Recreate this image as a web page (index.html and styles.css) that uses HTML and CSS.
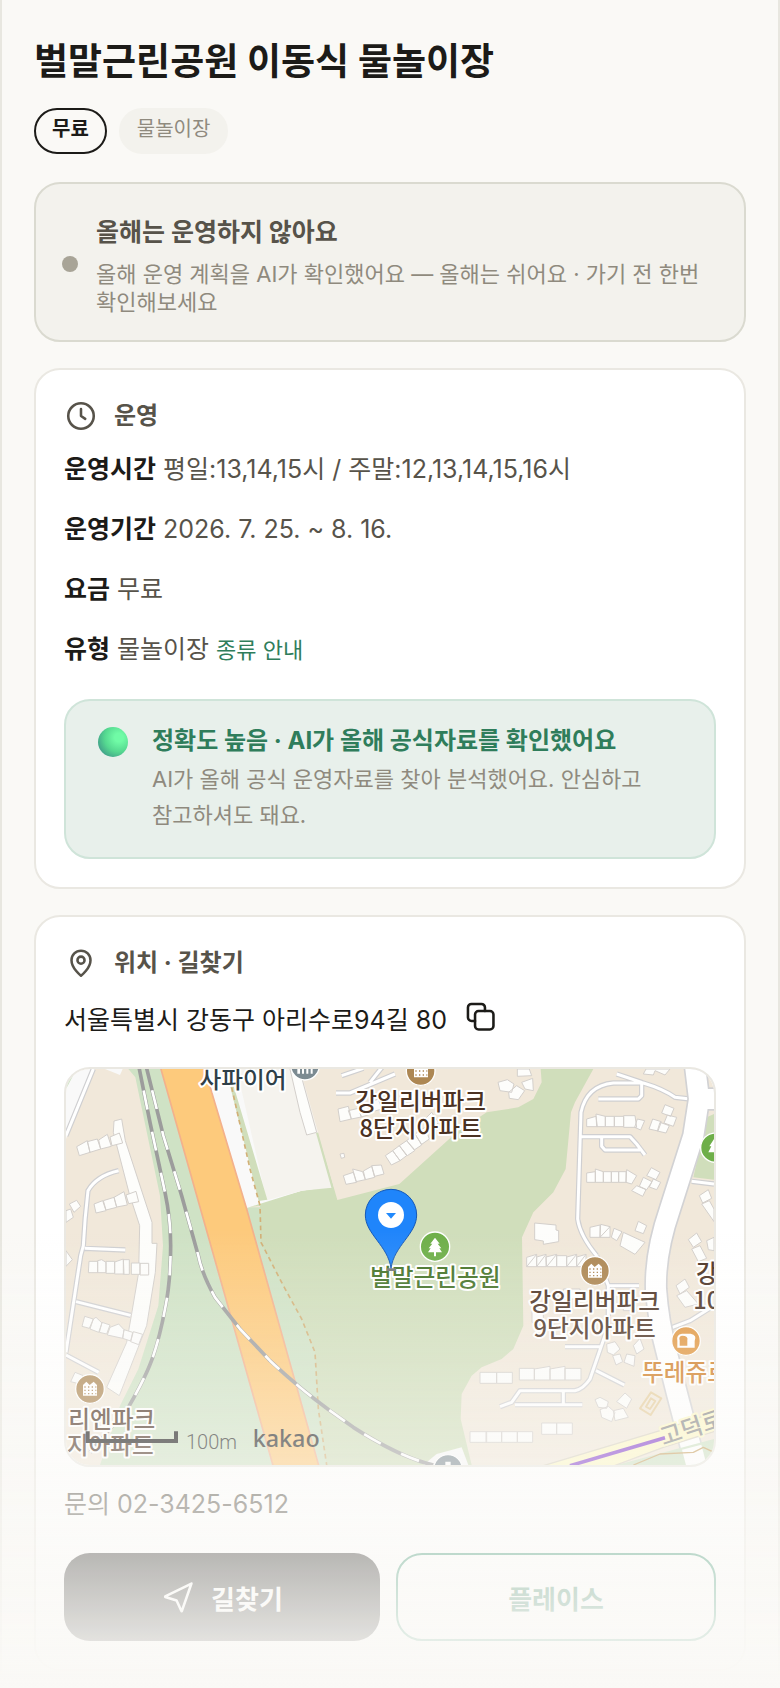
FILE: index.html
```
<!DOCTYPE html>
<html lang="ko">
<head>
    <meta charset="UTF-8">
    <meta name="viewport" content="width=device-width, initial-scale=1.0">
    <title>벌말근린공원 이동식 물놀이장</title>
    <link rel="stylesheet" href="styles.css">
</head>
<body>
    <main class="page">
        <h1>벌말근린공원 이동식 물놀이장</h1>
        <div class="tags">
            <span class="tag tag-free">무료</span>
            <span class="tag">물놀이장</span>
        </div>

        <section class="notice">
            <span class="notice-dot"></span>
            <div>
                <h2>올해는 운영하지 않아요</h2>
                <p>올해 운영 계획을 AI가 확인했어요 — 올해는 쉬어요 · 가기 전 한번 확인해보세요</p>
            </div>
        </section>

        <!-- 운영 정보 -->
        <section class="card">
            <h2 class="card-title">
                <svg class="icon" viewBox="0 0 24 24"><circle cx="12" cy="12" r="9"/><path d="M12 7v5l3 2"/></svg>
                운영
            </h2>
            <div class="rows">
                <p><strong>운영시간</strong> 평일:13,14,15시 / 주말:12,13,14,15,16시</p>
                <p><strong>운영기간</strong> 2026. 7. 25. ~ 8. 16.</p>
                <p><strong>요금</strong> 무료</p>
                <p><strong>유형</strong> 물놀이장 <a href="#">종류 안내</a></p>
            </div>
            <div class="trust">
                <span class="ball"></span>
                <div>
                    <h3>정확도 높음 · AI가 올해 공식자료를 확인했어요</h3>
                    <p>AI가 올해 공식 운영자료를 찾아 분석했어요. 안심하고 참고하셔도 돼요.</p>
                </div>
            </div>
        </section>

        <!-- 위치 -->
        <section class="card">
            <h2 class="card-title">
                <svg class="icon" viewBox="0 0 24 24"><path d="M12 21s6.700-5.200 6.700-11A6.700 6.700 0 0 0 5.300 10c0 5.800 6.700 11 6.700 11z"/><circle cx="12" cy="10" r="2.500"/></svg>
                위치 · 길찾기
            </h2>
            <div class="address">
                <span>서울특별시 강동구 아리수로94길 80</span>
                <button type="button" class="copy" aria-label="주소 복사">
                    <svg class="icon" viewBox="0 0 24 24"><rect x="8.500" y="8.500" width="13" height="13" rx="2.500"/><path d="M8.500 15.500H6A2.500 2.500 0 0 1 3.500 13V6A2.500 2.500 0 0 1 6 3.500h7A2.500 2.500 0 0 1 15.500 6v2.500"/></svg>
                </button>
            </div>

            <div class="map">
                <svg viewBox="48 30 1944 1188" preserveAspectRatio="xMidYMid slice">
                    <rect class="land" x="48" y="30" width="1944" height="1188"/>
                    <!-- 녹지 -->
                    <path class="verge" d="M235 30L256 55 330 410 339 560 325 740 265 930 210 1040 150 1218H1000V445H590L470 30Z"/>
                    <path class="park" d="M590 445L650 425 755 395 815 386 850 385 1000 30H1630L1575 130 1563 160 1547 330 1510 400 1450 460 1416 535 1420 800 1390 870 1355 900 1295 925 1265 950 1235 1005 1232 1080 1265 1218H830L805 1050 795 880 755 780 700 680 633 550 630 440Z"/>
                    <path class="plain" d="M462 30H770L860 385 815 386 755 395 590 447Z"/>
                    <path class="plain-warm" d="M560 30H770L860 385 755 395 650 424Z"/>
                    <path class="park" d="M535 30L552 85 652 422 626 426 540 80ZM798 222L806 220 862 420 848 400Z"/>
                    <path class="land" d="M750 30L862 423 1048 375 1220 220 1310 160 1405 145 1450 120 1475 70 1472 30Z"/>
                    <path class="plain" d="M48 60L80 30H130L48 240ZM165 30H218L210 48Z"/>
                    <path class="verge" d="M48 90L80 30H48Z"/>
                    <path class="plain" d="M1120 1218L1160 1185 1235 1165 1255 1218Z"/>

                    <!-- 고속도로 -->
                    <path class="highway" d="M330 20L672 1230H809L590 450 485 100 463 20Z"/>
                    <path class="trail" d="M545 85L600 330 630 440 633 550 700 680 755 780 795 880 805 1050 830 1218"/>

                    <!-- 철도 -->
                    <path class="rail" d="M266 20L300 190 345 400Q362 480 362 560 362 670 345 750 330 830 310 890 290 950 235 1045L120 1180"/>
                    <path class="rail-dash" d="M266 20L300 190 345 400Q362 480 362 560 362 670 345 750 330 830 310 890 290 950 235 1045L120 1180"/>
                    <path class="rail" d="M288 20L340 230 395 410 445 590Q456 645 495 715L570 810 660 905Q750 990 840 1055L910 1105Q1050 1195 1150 1218"/>
                    <path class="rail-dash" d="M288 20L340 230 395 410 445 590Q456 645 495 715L570 810 660 905Q750 990 840 1055L910 1105Q1050 1195 1150 1218"/>

                    <!-- 골목길 -->
                    <g class="street-edge">
                        <path d="M130 30L48 230M206 335Q140 350 114 395 104 480 100 560L92 590 48 880M104 568L226 573M78 728L242 769M48 888L146 940"/>
                        <path d="M1640 590Q1590 530 1583 480L1593 160Q1610 80 1690 72H1780Q1840 90 1875 115L1920 120M1700 45L1775 70V110L1765 120H1645M1595 233H1740L1760 255 1785 288M1655 235V262L1665 273H1770M1640 590L1675 680H1767M1675 680V800L1620 960Q1600 990 1575 995H1410L1385 1030 1350 1043M1395 1037H1597M1540 1000V1035M1545 863H1650M1638 935L1723 978M1860 808L1920 785 1992 740M1925 367L1992 375"/>
                        <path d="M858 102H900L1035 45M875 50L940 28M1000 20L960 70"/>
                    </g>
                    <g class="street">
                        <path d="M130 30L48 230M206 335Q140 350 114 395 104 480 100 560L92 590 48 880M104 568L226 573M78 728L242 769M48 888L146 940"/>
                        <path d="M1640 590Q1590 530 1583 480L1593 160Q1610 80 1690 72H1780Q1840 90 1875 115L1920 120M1700 45L1775 70V110L1765 120H1645M1595 233H1740L1760 255 1785 288M1655 235V262L1665 273H1770M1640 590L1675 680H1767M1675 680V800L1620 960Q1600 990 1575 995H1410L1385 1030 1350 1043M1395 1037H1597M1540 1000V1035M1545 863H1650M1638 935L1723 978M1860 808L1920 785 1992 740M1925 367L1992 375"/>
                        <path d="M858 102H900L1035 45M875 50L940 28M1000 20L960 70"/>
                    </g>

                    <!-- 도로 -->
                    <path class="park" d="M1992 165L1970 175 1930 355 1992 362Z"/>
                    <path class="road-edge" d="M1935 20L1947 120 1930 230 1860 450Q1815 580 1818 690 1825 790 1850 880L1880 1000 1940 1230M1940 120L1992 120"/>
                    <path class="road" d="M1935 20L1947 120 1930 230 1860 450Q1815 580 1818 690 1825 790 1850 880L1880 1000 1940 1230M1940 120L1992 120"/>
                    <path class="verge" d="M1700 1218L1992 1140V1218Z"/>
                    <path class="avenue" d="M1440 1232L1840 1112 2000 1058V1115L1840 1165 1680 1225Z"/>
                    <path class="subway" d="M1560 1220L1845 1136"/>
                    <path class="road" d="M1925 1165L1942 1230"/>
                    <path class="main-trail" d="M1750 1218L1830 1185 1930 1180 1960 1165 1992 1180"/>

                    <!-- 건물 -->
                    <g class="building">
                        <path d="M192 186L215 180 226 245 306 490V553H321L316 640 290 800 208 1010 170 985 230 850 244 770 266 640 269 500 238 405 190 220Z"/>
                        <path d="M80 263L112 245 120 280 88 290ZM112 248L142 240 152 270 120 280ZM146 243L172 226 184 262 152 270ZM180 234L208 222 218 252 186 260Z"/>
                        <path d="M132 435L158 425 168 455 138 462ZM160 425L192 415 200 445 168 453ZM192 415L222 398 232 438 200 444ZM228 408L258 397 266 428 236 434Z"/>
                        <path d="M48 455L62 450 70 475 48 490ZM58 435L80 424 92 442 72 460ZM48 575L67 602 48 622Z"/>
                        <path d="M117 607H143V641H115ZM143 605L155 602 168 610V641H143ZM168 607H194V643H168ZM194 609L220 600 222 645H194ZM220 602H238V646H220ZM244 612H270V646H244ZM270 613H296V648H270Z"/>
                        <path d="M104 772L130 780 118 808 96 802ZM130 780L138 775 156 792 146 820 120 810ZM156 790L180 798 170 825 148 820ZM180 805L206 795 222 812 218 838 172 828ZM222 812L248 820 242 846 218 838ZM250 818L278 826 266 857 242 848ZM75 940L100 950 90 975 62 968Z"/>
                        <path d="M720 30L748 30 800 220 770 228 750 160ZM870 285L882 283 884 295 874 298Z"/>
                        <path d="M864 150L895 142 904 180 870 188ZM895 155L925 148 934 174 904 180ZM925 145L950 132 960 166 934 174ZM960 130L985 120 996 150 968 158Z"/>
                        <path d="M880 350L910 340 920 370 888 376ZM908 330L938 338 946 362 918 368ZM940 336L965 322 974 355 946 362ZM965 320L994 318 1002 345 974 352Z"/>
                        <path d="M1006 290L1028 275 1050 305 1024 318ZM1028 275L1048 260 1070 290 1050 305ZM1048 260L1070 245 1094 275 1072 290ZM1070 245L1095 225 1115 258 1094 272ZM1095 225L1125 205 1138 240 1115 256ZM1120 185L1145 160 1165 190 1140 220Z"/>
                        <path d="M1344 70L1372 62 1392 75 1385 100 1350 95ZM1402 30H1438L1445 50 1402 52ZM1415 70L1448 58 1450 95 1425 90ZM1376 100L1400 80 1424 95 1405 122 1378 118ZM1788 30L1780 45 1810 48 1815 35 1845 48 1860 30Z"/>
                        <path d="M1610 180L1638 172 1642 203H1610ZM1638 165L1666 172V203H1640ZM1666 172H1693V203H1666ZM1693 172H1721V203H1693ZM1721 170H1755L1760 205H1721ZM1762 180L1784 185 1772 213 1754 205Z"/>
                        <path d="M1845 137L1872 148 1862 172 1835 162ZM1852 168L1880 175 1870 202 1842 192ZM1808 180L1834 188 1824 216 1797 210ZM1830 190L1858 200 1848 222 1822 216Z"/>
                        <path d="M1610 342L1636 338V370H1610ZM1636 330L1660 338V370H1636ZM1660 338H1684V370H1660ZM1684 338H1706V370H1684ZM1706 338H1728V370H1706ZM1730 332L1760 350 1745 375 1728 370Z"/>
                        <path d="M1804 326L1830 340 1818 362 1790 350ZM1780 355L1806 368 1790 392 1768 382ZM1810 360L1832 370 1820 392 1798 384ZM1760 380L1788 392 1778 412 1745 395Z"/>
                        <path d="M1454 492L1518 498V513L1526 515V548L1480 556V546L1454 542ZM1620 505L1650 498V535H1620ZM1652 496L1680 503V535H1650ZM1650 535L1680 503M1692 508L1716 518 1700 545 1684 535ZM1765 487L1790 500 1780 524 1755 515ZM1720 520L1785 550 1755 586 1710 560Z"/>
                        <path d="M1430 595L1460 586V623H1430ZM1460 594L1488 586V623H1460ZM1488 594L1520 586V623H1490ZM1520 590H1550V623H1520ZM1550 594L1580 586V623H1550ZM1580 594L1608 586V623H1580ZM1430 623L1460 586M1460 623L1488 586M1490 623L1520 586M1550 623L1580 586M1580 623L1608 586"/>
                        <path d="M1446 755H1480V790H1446ZM1540 690H1590V720H1540ZM1720 730H1750V755H1720Z"/>
                        <path d="M1290 940H1340V973H1290ZM1340 940H1387V973H1340ZM1408 928H1453V963H1408ZM1453 930L1500 922V963H1453ZM1500 930L1545 922V963H1500ZM1545 928H1593V963H1545Z"/>
                        <path d="M1260 1118H1310V1150H1260ZM1308 1118H1355V1150H1308ZM1355 1118H1402V1150H1355ZM1402 1118H1448V1150H1402ZM1475 1092H1520V1126H1475ZM1520 1092H1567V1126H1520Z"/>
                        <path d="M1670 855L1695 848 1710 870 1690 888 1672 880ZM1688 890L1710 885 1718 908 1698 918ZM1730 885L1755 890 1752 922 1722 910ZM1750 860L1770 838 1782 870 1760 885Z"/>
                        <path d="M1635 1022L1650 1015 1675 1028 1670 1048 1645 1045ZM1650 1052L1675 1042 1695 1060 1685 1088 1655 1075ZM1690 1055L1720 1048 1735 1075 1695 1085ZM1700 1028L1725 1002 1745 1020 1730 1048Z"/>
                        <path d="M1948 410L1975 392 1985 418 1958 432ZM1955 435L1978 425 1992 450V488ZM1915 542L1940 522 1955 548 1930 565ZM1925 570L1950 560 1970 598 1945 608ZM1970 545L1992 535V575L1975 572ZM1878 680L1905 660 1918 685 1890 705ZM1880 710L1910 695 1945 735 1905 745Z"/>
                    </g>
                    <path class="court" d="M1803 1000L1834 1018 1802 1068 1770 1048ZM1803 1018L1816 1026 1800 1050 1788 1043Z"/>

                    <!-- 마커 -->
                    <g class="marker apt">
                        <circle cx="1112" cy="36" r="43"/><circle cx="1635" cy="636" r="43"/><circle cx="120" cy="990" r="43"/>
                    </g>
                    <g class="marker-sign">
                        <path d="M1092 15h42v40h-42z"/>
                        <path d="M1614 656v-32l10-10 10 10 12-10 10 10v32zM99 1010v-32l10-10 10 10 12-10 10 10v32z"/>
                    </g>
                    <g class="marker-window">
                        <path d="M1096 24h36M1096 36h36M1096 48h36M1618 630h36M1618 640h36M1618 650h36M103 984h36M103 994h36M103 1004h36"/>
                    </g>
                    <g class="marker civic"><circle cx="765" cy="20" r="43"/><circle cx="1194" cy="1230" r="43"/></g>
                    <path class="marker-sign" d="M742 30h8v14h-8zM756 30h6v14h-6zM769 30h6v14h-6zM782 30h6v14h-6zM1186 1208h16v20h-16z"/>
                    <g class="marker green"><circle cx="1155" cy="563" r="44"/><circle cx="1996" cy="266" r="44"/></g>
                    <path class="marker-sign" d="M1155 536l14 18h-6l11 14h-6l8 12h-18v12h-6v-12h-18l8-12h-6l11-14h-6zM1992 240l-14 22h6l-9 18h17z"/>
                    <g class="marker bakery"><circle cx="1908" cy="846" r="43"/></g>
                    <path class="marker-sign" d="M1882 866V846Q1878 826 1896 824H1922Q1942 828 1934 846V866Z"/>
                    <path class="bread" d="M1889 860V844Q1885 832 1896 830 1916 830 1912 844V860Z"/>

                    <!-- 지명 -->
                    <g class="place">
                        <text class="dark" x="579" y="88">사파이어</text>
                        <text x="1112" y="154">강일리버파크</text>
                        <text x="1112" y="233">8단지아파트</text>
                        <text x="1634" y="754">강일리버파크</text>
                        <text x="1634" y="833">9단지아파트</text>
                        <text x="1971" y="669">강</text>
                        <text class="start" x="1930" y="750">10단지</text>
                        <text class="start" x="55" y="1107">리엔파크</text>
                        <text class="start" x="50" y="1186">지아파트</text>
                        <text class="start orange" x="1776" y="965">뚜레쥬르</text>
                        <text class="park-name" x="1156" y="682">벌말근린공원</text>
                        <text class="road-name start" x="1840" y="1160" transform="rotate(-18 1840 1160)">고덕로</text>
                    </g>

                    <path class="pin-shadow" d="M1010 628h28v8h-28z"/>
                    <path class="pin" d="M1023 628C1014 560 946 525 946 468A77 77 0 0 1 1100 468C1100 525 1032 560 1023 628Z"/>
                    <circle class="pin-hole" cx="1023" cy="468" r="39"/>
                    <path class="pin-arrow" d="M1008 462h30l-15 17z"/>

                    <path class="scale" d="M113 1117V1146H378V1117"/>
                    <text class="scale-text" x="408" y="1169">100m</text>
                    <text class="logo-text" x="608" y="1163">kakao</text>
                </svg>
            </div>

            <p class="phone">문의 02-3425-6512</p>
            <div class="actions">
                <button type="button" class="btn btn-dark">
                    <svg class="icon" viewBox="0 0 24 24"><path d="M21.500 2.500L3 11.500v.500l8 2.500 3.500 7.500h.200z"/></svg>
                    길찾기
                </button>
                <button type="button" class="btn btn-line">플레이스</button>
            </div>
        </section>
    </main>
    <div class="fade"></div>
</body>
</html>
```
FILE: styles.css
```
* {
    box-sizing: border-box;
    margin: 0;
    padding: 0;
}
body {
    font-family: Inter, "Noto Sans CJK KR", sans-serif;
    font-size: 25px;
    line-height: 42px;
    color: #1c1b18;
    background-color: #faf9f6;
    word-break: keep-all;
}
.page {
    padding: 32px 32px 16px;
    border-left: 2px solid #e8e7e0;
    border-right: 2px solid #e8e7e0;
}
h1 {
    font-size: 37px;
    line-height: 60px;
    font-weight: 700;
}
.tags {
    display: flex;
    gap: 12px;
    margin-top: 16px;
}
.tag {
    padding: 4px 16px 8px;
    border: 2px solid #f3f2ed;
    border-radius: 23px;
    background-color: #f3f2ed;
    color: #8f8a7e;
    font-size: 20px;
    line-height: 30px;
}
.tag-free {
    border-color: #1c1b18;
    background-color: transparent;
    color: #1c1b18;
    font-weight: 600;
}

/* 운영 안내 */
.notice {
    display: flex;
    align-items: center;
    gap: 18px;
    margin-top: 28px;
    padding: 28px 26px 24px;
    border: 2px solid #dadad0;
    border-radius: 26px;
    background-color: #f3f2ed;
}
.notice-dot {
    flex-shrink: 0;
    width: 16px;
    height: 16px;
    border-radius: 50%;
    background-color: #a8a497;
}
.notice h2 {
    font-size: 25px;
    line-height: 40px;
    color: #57534a;
}
.notice p {
    margin-top: 8px;
    font-size: 22px;
    line-height: 28px;
    color: #8f8a7e;
}

.card {
    margin-top: 26px;
    padding: 28px;
    border: 2px solid #eae8e2;
    border-radius: 26px;
    background-color: #fff;
}
.card-title {
    display: flex;
    align-items: center;
    gap: 16px;
    font-size: 24px;
    line-height: 36px;
    color: #57534a;
}
.icon {
    flex-shrink: 0;
    width: 34px;
    height: 34px;
    fill: none;
    stroke: currentColor;
    stroke-width: 1.8;
    stroke-linecap: round;
    stroke-linejoin: round;
}
.rows {
    display: grid;
    gap: 18px;
    margin-top: 14px;
    color: #57534a;
}
.rows strong {
    color: #1c1b18;
}
.rows a {
    font-size: 22px;
    color: #2f7d5b;
    text-decoration: none;
}

/* AI 정확도 */
.trust {
    display: flex;
    gap: 24px;
    margin-top: 28px;
    padding: 22px 32px 24px;
    border: 2px solid #cfe4d9;
    border-radius: 26px;
    background-color: #e8f0eb;
}
.ball {
    flex-shrink: 0;
    width: 30px;
    height: 30px;
    margin-top: 4px;
    border-radius: 50%;
    background: radial-gradient(circle at 70% 35%, #70fba6 15%, #55d890 50%, #44a98a 75%, #5297a0);
}
.trust h3 {
    font-size: 24px;
    line-height: 36px;
    color: #2f7d5b;
}
.trust p {
    margin-top: 2px;
    font-size: 22px;
    line-height: 36px;
    color: #8f8a7e;
}

.address {
    display: flex;
    gap: 16px;
    margin-top: 18px;
}
.copy {
    height: 34px;
    border: none;
    background: none;
    color: #1c1b18;
    cursor: pointer;
}
.phone {
    margin-top: 16px;
    color: #57534a;
}
.actions {
    display: flex;
    gap: 16px;
    margin-top: 28px;
}
.btn {
    display: flex;
    flex: 1;
    align-items: center;
    justify-content: center;
    gap: 16px;
    height: 88px;
    border: none;
    border-radius: 26px;
    font-family: inherit;
    font-size: 26px;
    font-weight: 700;
    cursor: pointer;
}
.btn-dark {
    background-color: #1c1b18;
    color: #fff;
}
.btn-line {
    border: 2px solid #2f8d69;
    background-color: #fff;
    color: #2f7d5b;
}

/* 지도 */
.map {
    height: 400px;
    margin-top: 26px;
    border: 2px solid #eae8e2;
    border-radius: 26px;
    overflow: hidden;
}
.map svg {
    display: block;
    width: 100%;
    height: 100%;
}
.map path {
    fill: none;
    stroke-linejoin: round;
}
.map .land { fill: #f1e8da; }
.map .park { fill: #d0debb; }
.map .verge { fill: #cfe2c5; }
.map .plain { fill: #f9f9f9; }
.map .plain-warm { fill: #f5f3ee; }
.map .highway {
    fill: #fdca7c;
    stroke: #f3b18c;
    stroke-width: 5;
}
.map .trail {
    stroke: #d2b077;
    stroke-width: 5;
    stroke-dasharray: 14 11;
}
.map .rail {
    stroke: #9c9c9c;
    stroke-width: 11;
}
.map .rail-dash {
    stroke: #fff;
    stroke-width: 8;
    stroke-dasharray: 58 68;
    stroke-dashoffset: 50;
}
.map .street-edge path {
    stroke: #cfcfd1;
    stroke-width: 16;
}
.map .street path {
    stroke: #fff;
    stroke-width: 9;
}
.map .road-edge {
    stroke: #d2d2d4;
    stroke-width: 70;
}
.map .road {
    stroke: #fff;
    stroke-width: 60;
}
.map .avenue {
    fill: #fdf8c6;
    stroke: #d8d2c0;
    stroke-width: 4;
}
.map .subway {
    stroke: #8440cc;
    stroke-width: 11;
}
.map .main-trail {
    stroke: #c8a060;
    stroke-width: 4;
}
.map .building path {
    fill: #fdfdfb;
    stroke: #d3cfcb;
    stroke-width: 3;
}
.map .court {
    stroke: #e5cd9d;
    stroke-width: 6;
}
.marker circle {
    stroke: #fff;
    stroke-width: 4;
}
.apt { fill: #ad8753; }
.civic { fill: #7c8b92; }
.green { fill: #6eaf49; }
.bakery { fill: #e0953e; }
.map .marker-sign,
.map .marker-sign path {
    fill: #fff;
}
.map .marker-window path {
    stroke: #ad8753;
    stroke-width: 4;
    stroke-dasharray: 4 7;
}
.map .bread { fill: #e0953e; }
.place {
    font-family: "Noto Sans CJK KR", sans-serif;
    font-size: 71px;
    font-weight: 500;
    fill: #4b3223;
    stroke: #fff;
    stroke-width: 12;
    stroke-linejoin: round;
    paint-order: stroke;
    text-anchor: middle;
}
.place .start { text-anchor: start; }
.place .dark { fill: #2f3f48; }
.place .orange { fill: #cf7a20; }
.place .park-name { fill: #457328; }
.place .road-name {
    fill: #888;
    stroke: #fdf8c6;
}
.map .pin {
    fill: #1f85fb;
    stroke: #1559b8;
    stroke-width: 3;
}
.pin-hole { fill: #fff; }
.map .pin-arrow { fill: #2189fc; }
.map .pin-shadow { fill: #777; }
.map .scale {
    stroke: #111;
    stroke-width: 12;
    stroke-linejoin: miter;
}
.scale-text {
    font: 300 60px Roboto, sans-serif;
    fill: #222;
}
.logo-text {
    font: 500 70px "Noto Sans", sans-serif;
    fill: #222;
}

.fade {
    position: fixed;
    left: 0;
    right: 0;
    bottom: 0;
    height: 460px;
    background: linear-gradient(rgba(250, 249, 246, 0), #faf9f6);
    pointer-events: none;
}
```
